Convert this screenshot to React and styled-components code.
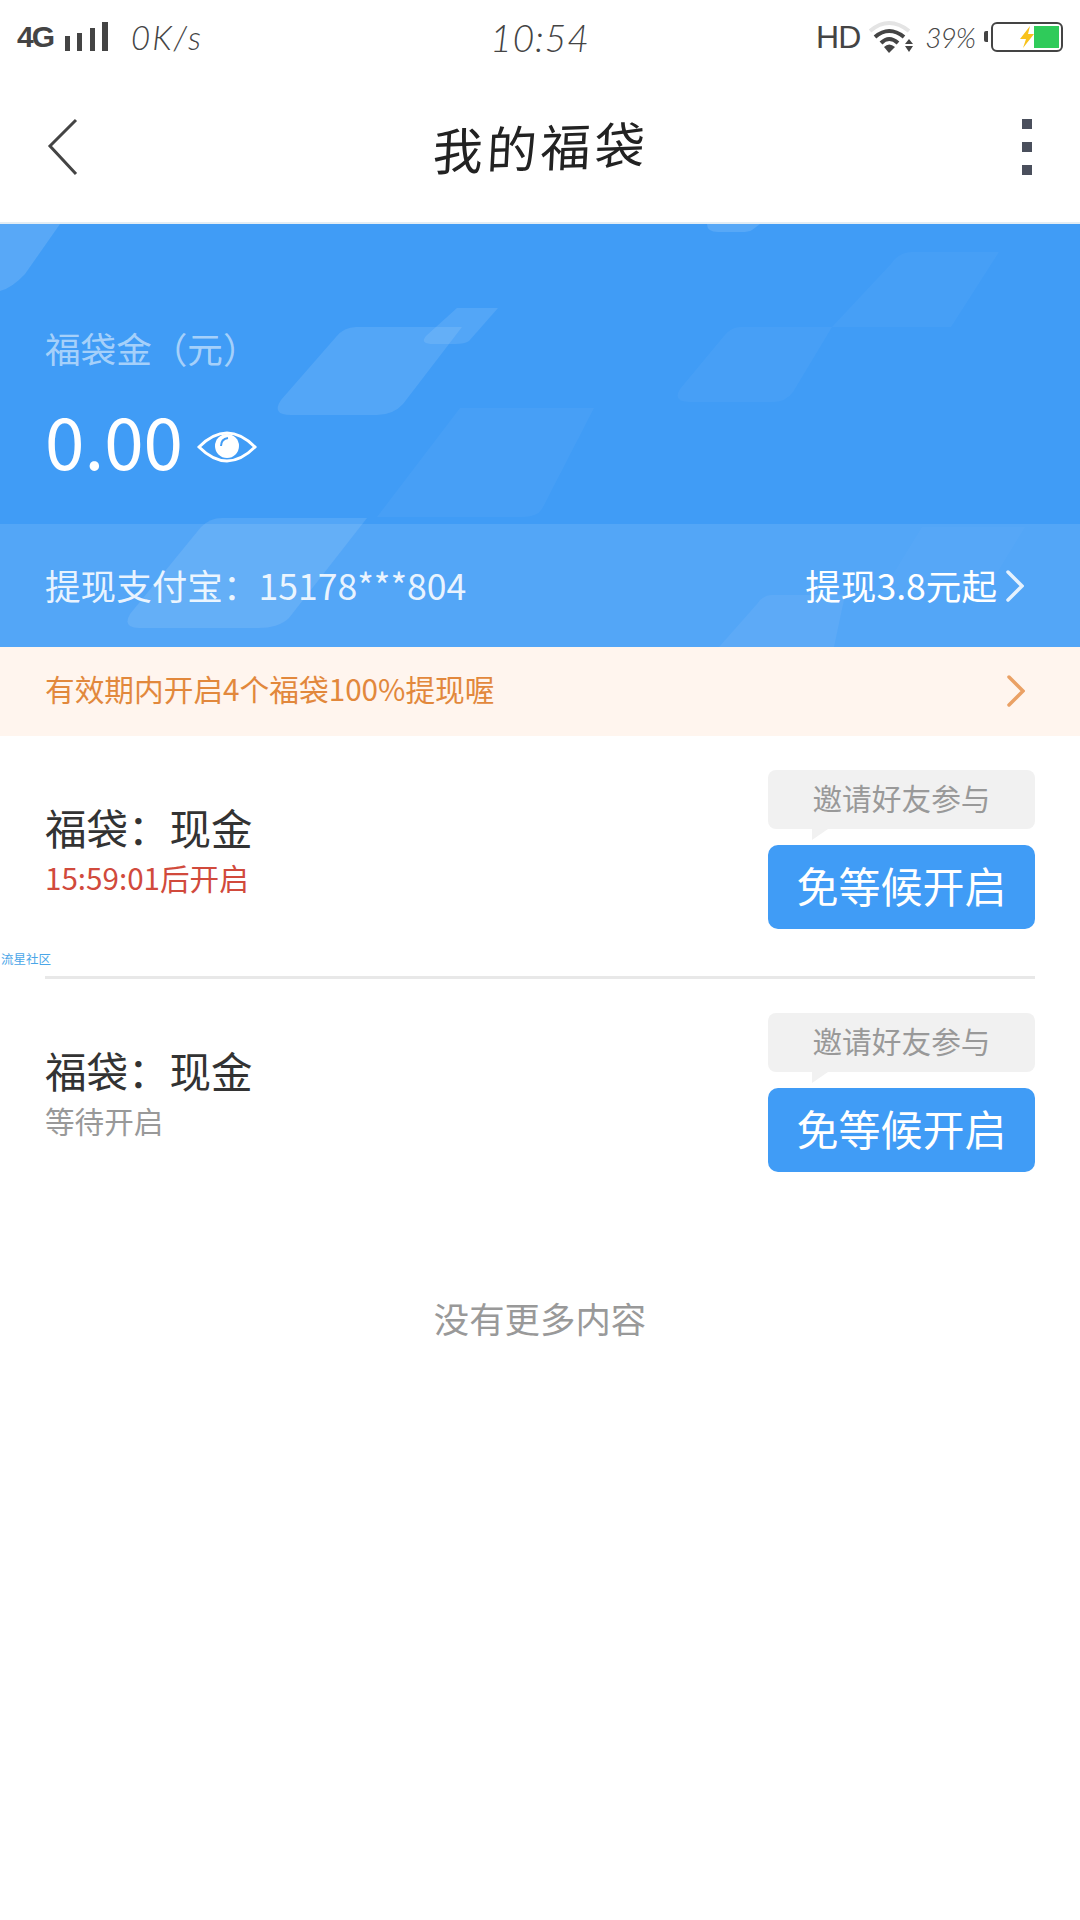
import React from "react";
import styled, { createGlobalStyle } from "styled-components";

const CJK = `"Noto Sans CJK SC", "Noto Sans", sans-serif`;

const GlobalStyle = createGlobalStyle`
  html, body {
    margin: 0;
    padding: 0;
    background: #fff;
  }
  body {
    font-family: ${CJK};
  }
  * {
    box-sizing: border-box;
  }
`;

const Page = styled.div`
  width: 1080px;
  height: 1920px;
  background: #fff;
  overflow: hidden;
`;

/* status bar */
const StatusBar = styled.div`
  height: 74px;
  padding: 0 17px;
  display: grid;
  grid-template-columns: 1fr auto 1fr;
  align-items: center;
  color: #444;
`;

const StatusLeft = styled.div`
  display: flex;
  align-items: center;
`;

const StatusRight = styled.div`
  display: flex;
  align-items: center;
  justify-content: flex-end;
`;

const Network = styled.span`
  font-family: "Liberation Sans", sans-serif;
  font-size: 30px;
  font-weight: 700;
  letter-spacing: -2px;
  width: 48px;
`;

const Speed = styled.span`
  font-family: Lato, sans-serif;
  font-size: 33px;
  font-style: italic;
  font-weight: 300;
  margin-left: 22px;
  letter-spacing: 2px;
  color: #444;
`;

const Clock = styled.span`
  font-family: Lato, sans-serif;
  font-size: 37px;
  font-style: italic;
  font-weight: 300;
  color: #444;
  letter-spacing: 1px;
`;

const HdLabel = styled.span`
  font-family: "Liberation Sans", sans-serif;
  font-size: 32px;
  letter-spacing: -1px;
  margin-right: 9px;
`;

const Percent = styled.span`
  font-family: Lato, sans-serif;
  font-size: 28px;
  font-style: italic;
  font-weight: 300;
  color: #444;
  margin-left: 10px;
  margin-right: 16px;
  letter-spacing: -1px;
`;

const Battery = styled.div`
  position: relative;
  width: 72px;
  height: 30px;
  border: 2.5px solid #444;
  border-radius: 6px;
  padding: 2px;
  display: flex;
  justify-content: flex-end;
  &::before {
    content: "";
    position: absolute;
    left: -9px;
    top: 7px;
    width: 4px;
    height: 11px;
    background: #444;
    border-radius: 2px 0 0 2px;
  }
`;

const BatteryFill = styled.div`
  width: 25px;
  height: 100%;
  background: #2fcb5a;
`;

const Bolt = styled.svg`
  position: absolute;
  left: 26px;
  top: 1px;
`;

/* nav */
const NavBar = styled.div`
  height: 150px;
  padding: 0 48px 2px 47px;
  display: flex;
  align-items: center;
  justify-content: space-between;
  border-bottom: 2px solid #e3edf4;
`;

const NavTitle = styled.h1`
  margin: 0 0 4px;
  font-family: ${CJK};
  font-size: 50px;
  font-weight: 400;
  letter-spacing: 4px;
  color: #222;
  transform: translateX(-10px) rotate(-2deg) skewX(-5deg);
`;

const Dots = styled.div`
  display: flex;
  flex-direction: column;
  gap: 13px;
`;

const Dot = styled.span`
  display: block;
  width: 10px;
  height: 10px;
  background: #4a4f5c;
`;

/* hero */
const Hero = styled.section`
  position: relative;
  height: 423px;
  background: #409cf6;
  overflow: hidden;
`;

const HeroArt = styled.svg`
  position: absolute;
  left: 0;
  top: 0;
`;

const HeroMain = styled.div`
  position: relative;
  height: 300px;
  padding: 99px 45px 0;
  color: #fff;
`;

const HeroLabel = styled.div`
  font-size: 35.6px;
  line-height: 50px;
  color: rgba(255, 255, 255, 0.55);
`;

const AmountRow = styled.div`
  display: flex;
  align-items: center;
  margin-top: 20px;
`;

const Amount = styled.span`
  font-size: 71px;
  line-height: 92px;
  color: #fff;
`;

const EyeIcon = styled.svg`
  margin-left: 14px;
  margin-top: 16px;
`;

const Band = styled.div`
  position: relative;
  height: 123px;
  padding: 0 56px 2px 45px;
  display: flex;
  align-items: center;
  justify-content: space-between;
  font-size: 35.6px;
  color: rgba(255, 255, 255, 0.88);
  background: rgba(255, 255, 255, 0.1);
`;

const BandLink = styled.div`
  display: flex;
  align-items: center;
  gap: 9px;
  color: #fff;
`;

const ChevronSvg = styled.svg`
  margin-top: ${(p) => p.$drop}px;
`;

/* notice */
const Notice = styled.div`
  height: 89px;
  padding: 0 55px 6px 45px;
  display: flex;
  align-items: center;
  justify-content: space-between;
  background: #fff5ee;
  color: #e2883c;
  font-size: 29.7px;
`;

/* list */
const Item = styled.div`
  position: relative;
  height: ${(p) => p.$height}px;
  padding-top: 34px;
  margin: 0 45px;
  display: flex;
  justify-content: space-between;
  border-bottom: ${(p) => (p.$divider ? "3px solid #e8e8e8" : "none")};
`;

const ItemInfo = styled.div`
  padding-top: 28px;
`;

const ItemTitle = styled.div`
  font-size: 41.5px;
  line-height: 58px;
  color: #333;
`;

const ItemStatus = styled.div`
  font-size: 29.6px;
  line-height: 44px;
  color: ${(p) => p.$color};
`;

const ItemActions = styled.div`
  width: 267px;
  display: flex;
  flex-direction: column;
  gap: 16px;
`;

const Bubble = styled.div`
  position: relative;
  height: 59px;
  padding-bottom: 5px;
  display: flex;
  align-items: center;
  justify-content: center;
  background: #f1f1f1;
  border-radius: 8px;
  color: #999;
  font-size: 29.7px;
  &::after {
    content: "";
    position: absolute;
    left: 44px;
    top: 100%;
    border-right: 16px solid transparent;
    border-top: 11px solid #f1f1f1;
  }
`;

const OpenButton = styled.button`
  height: 84px;
  border: 0;
  border-radius: 10px;
  background: #409cf6;
  color: #fff;
  font-family: ${CJK};
  font-size: 42px;
  padding: 0 0 5px;
`;

const Watermark = styled.span`
  position: absolute;
  left: -44px;
  top: 215px;
  font-size: 12.5px;
  line-height: 16px;
  color: #4aa6e8;
  white-space: nowrap;
`;

const EndText = styled.div`
  margin-top: 94px;
  text-align: center;
  font-size: 35.4px;
  line-height: 50px;
  color: #999;
`;

const Chevron = ({ color, width = 3, drop = 0 }) => (
  <ChevronSvg $drop={drop} width="18" height="32" viewBox="0 0 18 32">
    <path d="M2 2 L16 16 L2 30" fill="none" stroke={color} strokeWidth={width} strokeLinecap="round" />
  </ChevronSvg>
);

const SignalBars = () => (
  <svg width="44" height="32" viewBox="0 0 44 32">
    <rect x="0" y="15" width="5" height="15" fill="#444" />
    <rect x="12" y="12" width="5" height="18" fill="#444" />
    <rect x="25" y="7" width="5" height="23" fill="#444" />
    <rect x="37" y="1" width="6" height="29" fill="#444" />
  </svg>
);

const WifiIcon = () => (
  <svg width="46" height="34" viewBox="0 0 46 34">
    <path d="M1 11 Q20 -5 40 11" fill="none" stroke="#e4e4e4" strokeWidth="4" />
    <path d="M6 17 Q20 5 35 17" fill="none" stroke="#444" strokeWidth="4" />
    <path d="M12 23 Q20 15 29 23" fill="none" stroke="#444" strokeWidth="4" />
    <path d="M15 27 Q20 22 26 27 L20 33 Z" fill="#444" />
    <path d="M40 19 L44 24 L36 24 Z M36 26 L44 26 L40 32 Z" fill="#444" />
  </svg>
);

const shapes = [
  { d: "M0 0 L60 0 L25 50 Q12 64 0 67 Z", o: 0.13 },
  { d: "M356 103 L462 103 L403 180 Q393 191 377 191 L291 191 Q271 191 281 176 L336 113 Q344 103 356 103 Z", o: 0.1 },
  { d: "M457 84 L498 84 L469 117 Q465 120 455 120 L434 120 Q419 120 426 112 Z", o: 0.1 },
  { d: "M460 184 L594 184 L542 285 Q537 293 522 293 L377 293 Z", o: 0.04 },
  { d: "M222 294 L367 294 L289 394 Q279 404 258 404 L139 404 Q122 404 130 390 L201 303 Q210 294 222 294 Z", o: 0.1 },
  { d: "M741 103 L832 103 L793 168 Q786 178 772 178 L690 178 Q672 178 680 165 L724 112 Q731 103 741 103 Z", o: 0.04 },
  { d: "M912 28 L999 28 L951 103 L832 103 L891 40 Q899 28 912 28 Z", o: 0.03 },
  { d: "M707 0 L760 0 L752 6 Q749 8 741 8 L718 8 Q707 8 707 0 Z", o: 0.12 },
  { d: "M772 371 L845 371 L834 423 L719 423 L757 380 Q763 371 772 371 Z", o: 0.06 },
  { d: "M922 303 L1025 303 L984 370 L881 370 Z", o: 0.02 },
];

const items = [
  { status: "15:59:01后开启", color: "#d14a3c", height: 243, divider: true },
  { status: "等待开启", color: "#999", height: 220, divider: false },
];

const App = () => (
  <>
    <GlobalStyle />
    <Page>
      <StatusBar>
        <StatusLeft>
          <Network>4G</Network>
          <SignalBars />
          <Speed>0K/s</Speed>
        </StatusLeft>
        <Clock>10:54</Clock>
        <StatusRight>
          <HdLabel>HD</HdLabel>
          <WifiIcon />
          <Percent>39%</Percent>
          <Battery>
            <Bolt width="16" height="24" viewBox="0 0 16 24">
              <path d="M11 1 L1 14 L7 14 L4 23 L15 9 L9 9 Z" fill="#f8c21c" />
            </Bolt>
            <BatteryFill />
          </Battery>
        </StatusRight>
      </StatusBar>

      <NavBar>
        <svg width="32" height="58" viewBox="0 0 32 58">
          <path d="M29 2 L3 28 L29 56" fill="none" stroke="#444" strokeWidth="3" />
        </svg>
        <NavTitle>我的福袋</NavTitle>
        <Dots>
          <Dot />
          <Dot />
          <Dot />
        </Dots>
      </NavBar>

      <Hero>
        <HeroArt width="1080" height="423" viewBox="0 0 1080 423">
          {shapes.map((s) => (
            <path key={s.d} d={s.d} fill="#fff" fillOpacity={s.o} />
          ))}
        </HeroArt>
        <HeroMain>
          <HeroLabel>福袋金（元）</HeroLabel>
          <AmountRow>
            <Amount>0.00</Amount>
            <EyeIcon width="60" height="36" viewBox="0 0 60 36">
              <path d="M2 18 Q30 -10 58 18 Q30 46 2 18 Z" fill="none" stroke="#fff" strokeWidth="3" />
              <circle cx="30" cy="17" r="12" fill="#fff" />
              <path d="M24 17 Q24 10 31 9" fill="none" stroke="#409cf6" strokeWidth="2" />
            </EyeIcon>
          </AmountRow>
        </HeroMain>
        <Band>
          <span>提现支付宝：15178***804</span>
          <BandLink>
            提现3.8元起
            <Chevron color="rgba(255,255,255,0.85)" width={3.5} drop={3} />
          </BandLink>
        </Band>
      </Hero>

      <Notice>
        <span>有效期内开启4个福袋100%提现喔</span>
        <Chevron color="#eaa165" width={3.5} drop={4} />
      </Notice>

      {items.map((item) => (
        <Item key={item.status} $height={item.height} $divider={item.divider}>
          <ItemInfo>
            <ItemTitle>福袋：现金</ItemTitle>
            <ItemStatus $color={item.color}>{item.status}</ItemStatus>
          </ItemInfo>
          <ItemActions>
            <Bubble>邀请好友参与</Bubble>
            <OpenButton>免等候开启</OpenButton>
          </ItemActions>
          {item.divider && <Watermark>流星社区</Watermark>}
        </Item>
      ))}

      <EndText>没有更多内容</EndText>
    </Page>
  </>
);

export default App;
